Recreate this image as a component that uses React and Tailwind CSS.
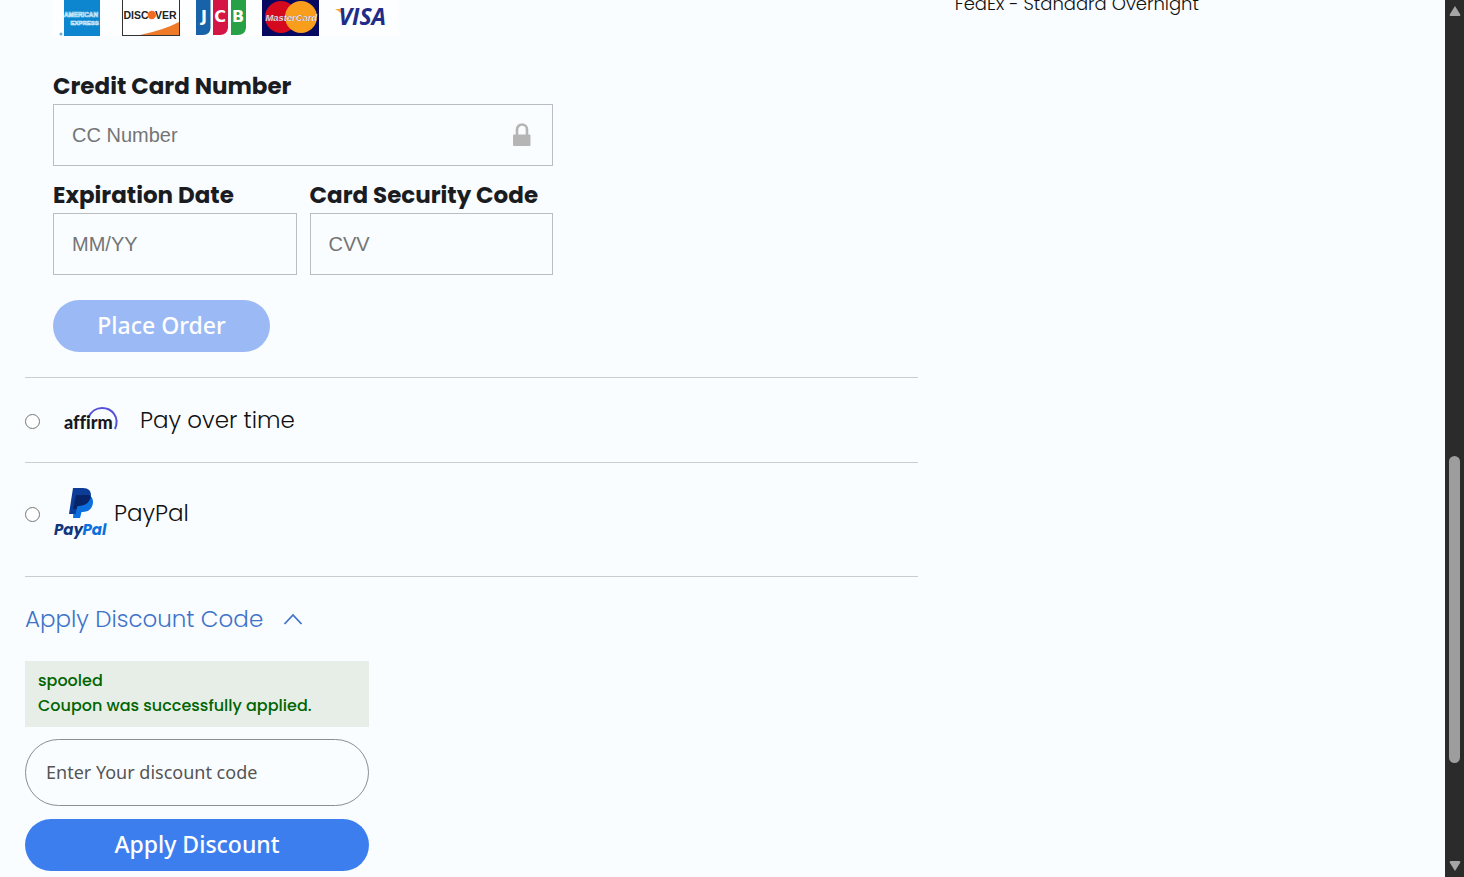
import React from "react";

const heading = "font-['Poppins','Inter',sans-serif]";
const button =
  "h-[52px] rounded-full pb-0.5 font-['Noto_Sans',sans-serif] text-[23px] font-medium text-white";
const field =
  "block h-[62px] w-full border border-[#b9bec3] bg-transparent px-[18px] font-['Liberation_Sans',sans-serif] text-xl text-[#333] outline-none placeholder:text-[#757575]";
const label = "block h-[38px] pt-0.5 text-[23px] leading-9 font-bold text-[#1a1c1f]";
const radio =
  "mt-0.5 size-[15px] shrink-0 appearance-none rounded-full border border-[#767676] bg-white checked:border-4 checked:border-[#3b7ded]";

function CardLogos() {
  return (
    <svg className="block h-9 w-[346px]" viewBox="0 0 346 36" role="img" aria-label="Accepted cards">
      <rect width="346" height="36" fill="#fcfeff" />
      <rect x="11" y="-8" width="36" height="44" fill="#0e86cf" />
      <g fill="#0e86cf" stroke="#c5e6f8" strokeWidth="0.7" fontFamily="Liberation Sans" fontWeight="700" fontSize="6.300">
        <text x="11" y="17">AMERICAN</text>
        <text x="17.500" y="24.500" fontSize="6">EXPRESS</text>
      </g>
      <circle cx="8" cy="34" r="1.5" fill="#65b1dc" />
      <rect x="69.5" y="-10" width="57" height="45.500" fill="#fff" stroke="#333" />
      <path d="M87 35 Q111 30 126 22 V35 Z" fill="#ef7b29" />
      <g fill="#222" fontFamily="Liberation Sans" fontWeight="700" fontSize="10.5">
        <text x="70.500" y="18.500">DISC</text>
        <text x="102" y="18.500">VER</text>
      </g>
      <circle cx="98.800" cy="15" r="4.200" fill="#f26b21" />
      <path d="M143 35 V-8 H157.500 V28 Q157 35 150 35 Z" fill="#1762a8" />
      <path d="M160 35 V-8 H175 V28 Q174 35 167 35 Z" fill="#d51543" />
      <path d="M178 35 V-8 H193 V28 Q192 35 185 35 Z" fill="#28a046" />
      <g fill="#fff" fontFamily="DejaVu Sans" fontWeight="700" fontSize="16" textAnchor="middle">
        <text x="151" y="22">J</text>
        <text x="167" y="22">C</text>
        <text x="185" y="22">B</text>
      </g>
      <rect x="209" y="-8" width="57" height="44" fill="#07085f" />
      <circle cx="228" cy="17" r="16" fill="#d5091e" />
      <circle cx="248" cy="17" r="16" fill="#f99d1c" />
      <text x="212.500" y="21" fill="#fff" stroke="#542b49" strokeWidth="0.200" fontFamily="Liberation Sans" fontWeight="700" fontStyle="italic" fontSize="9.400">MasterCard</text>
      <path d="M282 9 H289 L292 18 Q288 12 282 9 Z" fill="#f7a928" />
      <text x="285.500" y="25" fill="#202c87" fontFamily="Open Sans" fontWeight="700" fontStyle="italic" fontSize="23">VISA</text>
    </svg>
  );
}

function LockIcon() {
  return (
    <svg className="pointer-events-none absolute top-[19px] right-[22px] h-6 w-[18px]" viewBox="0 0 18 24" aria-hidden="true">
      <path d="M4 12 V6.500 A5 5 0 0 1 14 6.500 V12" fill="none" stroke="#b5b5b5" strokeWidth="2.600" />
      <rect y="11.500" width="17.500" height="11.500" rx="1" fill="#b5b5b5" />
    </svg>
  );
}

function AffirmLogo() {
  return (
    <svg className="h-7 w-[56px]" viewBox="0 0 56 28" aria-hidden="true">
      <path d="M24 12 C27 5 33 2 38 2 C48 2 56 11 51 23" fill="none" stroke="#5650d6" strokeWidth="2" />
      <text x="0" y="23" fill="#17181d" className="font-['Lato'] text-[18px] font-black [font-variant-ligatures:none]">affirm</text>
    </svg>
  );
}

function PayPalLogo() {
  return (
    <svg className="h-[54px] w-[54px]" viewBox="0 0 54 54" aria-hidden="true">
      <path d="M21 8 H35 C39 10 40 15 38 19.500 C36 24 32 25 27.500 25 L26 31 H19 Z" fill="#0b70dd" />
      <path d="M19 1 H29 C36 1 38 6 36.500 11 C34.500 17 29 19 23.500 19 L21.500 27 H15 Z" fill="#0b3d98" />
      <path d="M22 8 H35 L36.800 10 C34.800 17 29 19 23.500 19 L22.500 22 H19 Z" fill="#062467" />
      <g fontFamily="Poppins" fontWeight="700" fontStyle="italic" fontSize="15">
        <text x="0" y="48" fill="#11367d">Pay</text>
        <text x="28.500" y="48" fill="#0b70dd">Pal</text>
      </g>
    </svg>
  );
}

function Scrollbar() {
  return (
    <div className="sticky top-0 flex h-screen w-[19px] shrink-0 flex-col items-center justify-between bg-[#2b2b2b] py-[5px]" aria-hidden="true">
      <svg className="h-3 w-3" viewBox="0 0 12 12"><path d="M6 1 L11 9 Q12 11 10 11 H2 Q0 11 1 9 Z" fill="#a5a5a5" /></svg>
      <div className="flex w-full flex-1 flex-col items-center">
        <div className="flex-[440]" />
        <div className="w-[11px] flex-[307] rounded-full bg-[#9d9d9d]" />
        <div className="flex-[97]" />
      </div>
      <svg className="h-3 w-3" viewBox="0 0 12 12"><path d="M6 11 L11 3 Q12 1 10 1 H2 Q0 1 1 3 Z" fill="#a5a5a5" /></svg>
    </div>
  );
}

export default function App() {
  return (
    <div className={`flex min-h-screen bg-[#f9fdff] text-[#111] ${heading}`}>
      <div className="flex min-w-0 flex-1 items-start gap-[37px] px-[25px] pb-1.5">
        <main className="w-[64%]">
          <section className="border-b border-[#c9cdd0] pb-[25px] pl-7">
            <CardLogos />
            <form className="w-[500px] max-w-full pt-[30px]" onSubmit={(e) => e.preventDefault()}>
              <label className={label} htmlFor="number">Credit Card Number</label>
              <div className="relative">
                <input className={field} id="number" placeholder="CC Number" />
                <LockIcon />
              </div>
              <div className="grid grid-cols-2 gap-[13px] pt-[9px]">
                <div>
                  <label className={label} htmlFor="expiry">Expiration Date</label>
                  <input className={field} id="expiry" placeholder="MM/YY" />
                </div>
                <div>
                  <label className={label} htmlFor="cvv">Card Security Code</label>
                  <input className={field} id="cvv" placeholder="CVV" />
                </div>
              </div>
              <button className={`mt-[25px] w-[217px] bg-[#9bbaf5] ${button}`}>Place Order</button>
            </form>
          </section>

          <label className="flex h-[85px] items-center border-b border-[#c9cdd0] text-[23px] font-light">
            <input className={radio} type="radio" name="method" />
            <span className="mr-5 ml-6"><AffirmLogo /></span>
            Pay over time
          </label>
          <label className="flex h-[114px] items-center border-b border-[#c9cdd0] pb-3 text-[23px] font-light">
            <input className={radio} type="radio" name="method" />
            <span className="mr-1.5 ml-3.5"><PayPalLogo /></span>
            PayPal
          </label>

          <section className="w-[344px] max-w-full">
            <button className="flex h-[84px] items-center gap-5 text-[23px] font-light whitespace-nowrap text-[#3f73c9]" aria-expanded="true">
              Apply Discount Code
              <svg className="h-3 w-5" viewBox="0 0 20 12" fill="none" stroke="currentColor" strokeWidth="1.800" aria-hidden="true">
                <path d="M1.500 11 L10 2 L18.500 11" />
              </svg>
            </button>
            <div className="bg-[#e7eee7] px-[13px] pt-[7px] pb-[9px] text-base leading-[25px] font-medium text-[#006400]" role="status">
              <p>spooled</p>
              <p>Coupon was successfully applied.</p>
            </div>
            <form onSubmit={(e) => e.preventDefault()}>
              <input
                className="mt-3 block h-[67px] w-full rounded-full border border-[#8b8e92] bg-transparent px-5 pb-0.5 font-['Noto_Sans',sans-serif] text-lg outline-none placeholder:text-[#555]"
                aria-label="Discount code"
                placeholder="Enter Your discount code"
              />
              <button className={`mt-[13px] w-full bg-[#3d7eef] ${button}`}>Apply Discount</button>
            </form>
          </section>
        </main>
        <aside className="-mt-2 flex-1 text-lg leading-6 font-light">FedEx - Standard Overnight</aside>
      </div>
      <Scrollbar />
    </div>
  );
}
